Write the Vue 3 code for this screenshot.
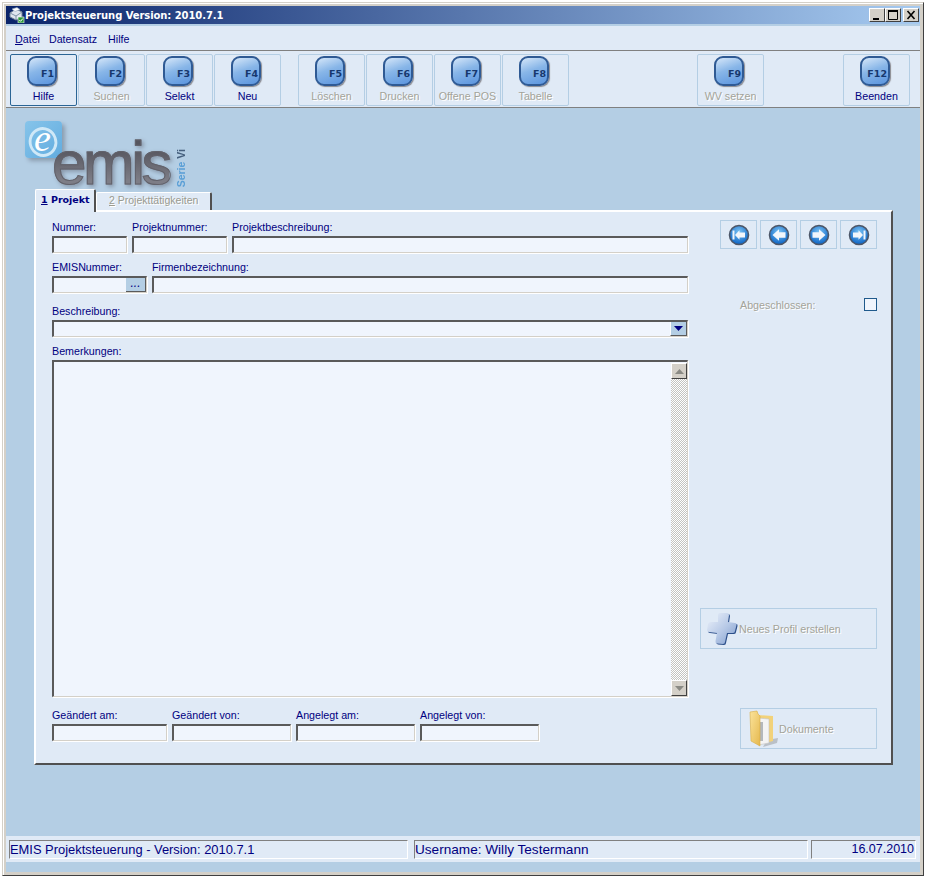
<template>
  <div class="frame">
    <div class="client">
      <!-- Title bar -->
      <div class="titlebar">
        <svg class="app-icon" width="17" height="16" viewBox="0 0 17 16">
          <path d="M2 6 L8 2 L14 5 L14 10 L8 13 L2 10Z" fill="#dfe6ee" stroke="#6f8296" stroke-width="1" />
          <path d="M2 6 L8 9 L14 5 M8 9 V13" fill="none" stroke="#7f93a8" stroke-width="1" />
          <path d="M4 2 L9 0.500 L12 2.500 L7 4.500Z" fill="#fff" stroke="#8fa3b8" stroke-width="0.600" />
          <rect x="10" y="10" width="6" height="6" fill="#2f9a3d" stroke="#fff" stroke-width="0.600" />
          <path d="M11.300 13 L12.600 14.300 L14.800 11.600" fill="none" stroke="#fff" stroke-width="1" />
        </svg>
        <span class="title-text">Projektsteuerung Version: 2010.7.1</span>
        <div class="win-buttons">
          <button class="win-btn">
            <svg width="14" height="12" viewBox="0 0 14 12"><rect x="3" y="9" width="6" height="2" fill="#000" /></svg>
          </button>
          <button class="win-btn">
            <svg width="14" height="12" viewBox="0 0 14 12"><path d="M2.500 2.500 H11.500 V10.500 H2.500Z" fill="none" stroke="#000" /><rect x="2" y="1" width="10" height="2" fill="#000" /></svg>
          </button>
          <button class="win-btn close">
            <svg width="14" height="12" viewBox="0 0 14 12"><path d="M3.500 2 L10.500 10 M10.500 2 L3.500 10" stroke="#000" stroke-width="1.600" /></svg>
          </button>
        </div>
      </div>

      <!-- Menu -->
      <nav class="menubar">
        <span><u>D</u>atei</span>
        <span>Datensatz</span>
        <span class="menu-help">Hilfe</span>
      </nav>

      <!-- Toolbar -->
      <div class="toolbar">
        <template v-for="group in toolbarGroups" :key="group.id">
          <div class="tool-group" :class="group.id">
            <button
              v-for="tool in group.tools"
              :key="tool.key"
              class="tool-btn"
              :class="{ disabled: tool.disabled, active: tool.active }"
            >
              <span class="fkey"><span class="fkey-text">{{ tool.key }}</span></span>
              <span class="tool-label">{{ tool.label }}</span>
            </button>
          </div>
        </template>
      </div>

      <main class="main">
        <!-- Logo -->
        <div class="logo">
          <div class="logo-badge">
            <span class="logo-ring"></span>
            <span class="logo-e">e</span>
          </div>
          <span class="logo-word">emis</span>
          <span class="logo-serie">Serie <b>Vi</b></span>
        </div>

        <!-- Tabs -->
        <div class="tabs">
          <div class="tab selected"><u>1</u> Projekt</div>
          <div class="tab"><u>2</u> Projekttätigkeiten</div>
        </div>

        <!-- Panel -->
        <section class="panel">
          <div class="form">
            <div class="row first">
              <label class="field w-nummer"><span>Nummer:</span><i class="input"></i></label>
              <label class="field w-projnr"><span>Projektnummer:</span><i class="input"></i></label>
              <label class="field grow"><span>Projektbeschreibung:</span><i class="input"></i></label>
            </div>
            <div class="row">
              <label class="field w-projnr">
                <span>EMISNummer:</span>
                <i class="input with-btn"><b class="dots">...</b></i>
              </label>
              <label class="field grow"><span>Firmenbezeichnung:</span><i class="input"></i></label>
            </div>
            <div class="row wide-gap">
              <label class="field grow">
                <span>Beschreibung:</span>
                <i class="input with-btn">
                  <b class="combo-arrow"><svg width="9" height="5" viewBox="0 0 9 5"><path d="M0 0 H9 L4.500 5Z" fill="#000080" /></svg></b>
                </i>
              </label>
            </div>
            <div class="row memo-row">
              <label class="field grow">
                <span>Bemerkungen:</span>
                <i class="input memo">
                  <b class="scrollbar">
                    <b class="scroll-btn"><svg width="9" height="5" viewBox="0 0 9 5"><path d="M0 5 H9 L4.500 0Z" fill="#8a8a84" /></svg></b>
                    <b class="scroll-track"></b>
                    <b class="scroll-btn"><svg width="9" height="5" viewBox="0 0 9 5"><path d="M0 0 H9 L4.500 5Z" fill="#8a8a84" /></svg></b>
                  </b>
                </i>
              </label>
            </div>
            <div class="row audit">
              <label class="field w-audit1"><span>Geändert am:</span><i class="input"></i></label>
              <label class="field w-audit"><span>Geändert von:</span><i class="input"></i></label>
              <label class="field w-audit"><span>Angelegt am:</span><i class="input"></i></label>
              <label class="field w-audit"><span>Angelegt von:</span><i class="input"></i></label>
            </div>
          </div>

          <aside class="side">
            <div class="nav-buttons">
              <button v-for="nav in navButtons" :key="nav" class="nav-btn">
                <svg width="22" height="22" viewBox="0 0 22 22">
                  <defs>
                    <radialGradient :id="'g' + nav" cx="50%" cy="35%" r="65%">
                      <stop offset="0" stop-color="#7cc4f4" />
                      <stop offset="1" stop-color="#0a62c4" />
                    </radialGradient>
                  </defs>
                  <circle cx="11" cy="11" r="9.500" :fill="'url(#g' + nav + ')'" stroke="#4c5668" stroke-width="1.600" />
                  <path v-if="nav === 'first'" d="M4.500 6.500 H6.500 V15.500 H4.500Z M7 11 L11.500 6.200 V8.500 H17 V13.500 H11.500 V15.800Z" fill="#f2f6fb" />
                  <path v-if="nav === 'prev'" d="M4.500 11 L11 5.200 V8.300 H17.500 V13.700 H11 V16.800Z" fill="#f2f6fb" />
                  <path v-if="nav === 'next'" d="M17.500 11 L11 5.200 V8.300 H4.500 V13.700 H11 V16.800Z" fill="#f2f6fb" />
                  <path v-if="nav === 'last'" d="M17.500 6.500 H15.500 V15.500 H17.500Z M15 11 L10.500 6.200 V8.500 H5 V13.500 H10.500 V15.800Z" fill="#f2f6fb" />
                </svg>
              </button>
            </div>

            <div class="closed-row">
              <span class="muted">Abgeschlossen:</span>
              <i class="checkbox"></i>
            </div>

            <button class="action-btn profile">
              <svg width="32" height="34" viewBox="0 0 32 34">
                <defs>
                  <linearGradient id="plus" x1="0" y1="0" x2="1" y2="1">
                    <stop offset="0" stop-color="#eef3fb" />
                    <stop offset="0.550" stop-color="#b6c8e6" />
                    <stop offset="1" stop-color="#7f9ccc" />
                  </linearGradient>
                </defs>
                <path d="M12 3 Q12 1 14 1 L21 1 Q23 1 23 3 L22 10 L29 11 Q31 11 30.500 13 L29 19 Q29 21 27 21 L21 21 L19 30 Q19 32 17 32 L11 31.500 Q9 31 9.500 29 L11 21 L3 20 Q1 20 1 18 L2 12 Q2.500 10 5 10 L12 10Z" fill="#2c4f8a" transform="translate(1 1)" />
                <path d="M12 3 Q12 1 14 1 L21 1 Q23 1 23 3 L22 10 L29 11 Q31 11 30.500 13 L29 19 Q29 21 27 21 L21 21 L19 30 Q19 32 17 32 L11 31.500 Q9 31 9.500 29 L11 21 L3 20 Q1 20 1 18 L2 12 Q2.500 10 5 10 L12 10Z" fill="url(#plus)" />
              </svg>
              <span class="muted">Neues Profil erstellen</span>
            </button>

            <button class="action-btn docs">
              <svg width="30" height="38" viewBox="0 0 30 38">
                <defs>
                  <linearGradient id="folder" x1="0" y1="0" x2="1" y2="1">
                    <stop offset="0" stop-color="#fbe39a" />
                    <stop offset="1" stop-color="#e5b84e" />
                  </linearGradient>
                </defs>
                <path d="M18 30 L29 28 L28 33 L14 37Z" fill="#a9aeb4" opacity="0.700" />
                <path d="M9 5 L24 6 L24 31 L9 35Z" fill="#f2d27a" />
                <path d="M9 8 L20 9 L20 33 L9 35Z" fill="#f4f4f4" stroke="#c2c2c2" stroke-width="0.600" />
                <path d="M11 12 H14 V31 H11Z" fill="#b4b8bc" />
                <path d="M1 2 L8 1 L9 4 L11 6 L11 36 L2 31Z" fill="url(#folder)" stroke="#d9ad45" stroke-width="0.600" />
              </svg>
              <span class="muted">Dokumente</span>
            </button>
          </aside>
        </section>
      </main>

      <!-- Status bar -->
      <footer class="statusbar">
        <div class="status-cell s1">EMIS Projektsteuerung - Version: 2010.7.1</div>
        <div class="status-cell s2">Username: Willy Testermann</div>
        <div class="status-cell s3">16.07.2010</div>
      </footer>
    </div>
  </div>
</template>

<script setup>
const toolbarGroups = [
  {
    id: 'g1',
    tools: [
      { key: 'F1', label: 'Hilfe', active: true },
      { key: 'F2', label: 'Suchen', disabled: true },
      { key: 'F3', label: 'Selekt' },
      { key: 'F4', label: 'Neu' }
    ]
  },
  {
    id: 'g2',
    tools: [
      { key: 'F5', label: 'Löschen', disabled: true },
      { key: 'F6', label: 'Drucken', disabled: true },
      { key: 'F7', label: 'Offene POS', disabled: true },
      { key: 'F8', label: 'Tabelle', disabled: true }
    ]
  },
  { id: 'g3', tools: [{ key: 'F9', label: 'WV setzen', disabled: true }] },
  { id: 'g4', tools: [{ key: 'F12', label: 'Beenden' }] }
];

const navButtons = ['first', 'prev', 'next', 'last'];
</script>

<style>
html, body { background: #fff; }
</style>

<style scoped>
.frame {
  width: 922px;
  height: 874px;
  margin: 2px 0 0 2px;
  padding: 3px;
  box-sizing: border-box;
  background: #d4d0c8;
  border: 1px solid #d4d0c8;
  border-right-color: #404040;
  border-bottom-color: #404040;
  box-shadow: inset 1px 1px 0 #fff;
  font-family: "Liberation Sans", Arial, sans-serif;
  font-size: 10.700px;
  color: #000080;
}

.client {
  height: 100%;
  display: flex;
  flex-direction: column;
  background: #b4cee4;
}

/* Title bar */
.titlebar {
  height: 18px;
  display: flex;
  align-items: center;
  padding: 0 1px 0 2px;
  background: linear-gradient(90deg, #0a246a, #a6caf0);
  flex-shrink: 0;
}
.title-text {
  font-family: "DejaVu Sans", sans-serif;
  font-weight: bold;
  font-size: 10px;
  letter-spacing: -0.080px;
  color: #fff;
  white-space: nowrap;
}
.win-buttons { margin-left: auto; display: flex; }
.win-btn {
  width: 16px;
  height: 14px;
  padding: 0;
  background: #d4d0c8;
  border: 1px solid;
  border-color: #fff #404040 #404040 #fff;
  display: flex;
  align-items: center;
  justify-content: center;
}
.win-btn.close { margin-left: 2px; }

/* Menu */
.menubar {
  height: 22px;
  margin-top: 2px;
  display: flex;
  align-items: center;
  gap: 9px;
  padding: 2px 0 0 9px;
  box-sizing: content-box;
  background: #e0eaf6;
  border-bottom: 1px solid #808080;
  flex-shrink: 0;
}
.menu-help { margin-left: 2px; }

/* Toolbar */
.toolbar {
  height: 52px;
  display: flex;
  padding: 3px 0 1px 4px;
  box-sizing: content-box;
  background: #e0eaf6;
  border-bottom: 1px solid #808080;
  flex-shrink: 0;
}
.tool-group { display: flex; gap: 1px; }
.g2 { margin-left: 17px; }
.g3 { margin-left: 128px; }
.g4 { margin-left: 79px; }
.tool-btn {
  width: 67px;
  height: 52px;
  padding: 1px 0 0;
  box-sizing: border-box;
  background: transparent;
  border: 1px solid #b4cee4;
  border-radius: 2px;
  display: flex;
  flex-direction: column;
  align-items: center;
  font: inherit;
  color: #000080;
}
.tool-btn.active { border-color: #2b6595; }
.tool-btn.disabled .tool-label { color: #a3a399; text-shadow: 1px 1px 0 #fff; }
.fkey {
  width: 30px;
  height: 30px;
  margin-right: 3px;
  box-sizing: border-box;
  border: 2px solid #2f5a94;
  border-radius: 9px;
  background: linear-gradient(160deg, #d6e7f9 0%, #88b6e8 45%, #5a94de 100%);
  box-shadow: 1px 1px 1px #8a8a90;
  display: flex;
  align-items: flex-end;
  justify-content: flex-end;
}
.fkey-text {
  font-size: 9.500px;
  font-weight: bold;
  font-family: "DejaVu Sans", sans-serif;
  color: #17386e;
  line-height: 12px;
  padding: 0 1px 4px 0;
}
.tool-label { margin-top: 3px; line-height: 14px; white-space: nowrap; }

/* Main */
.main {
  flex: 1;
  min-height: 0;
  padding-left: 28px;
  display: flex;
  flex-direction: column;
}

/* Logo */
.logo {
  position: relative;
  height: 81px;
  flex-shrink: 0;
}
.logo-badge {
  position: absolute;
  left: -9px;
  top: 13px;
  width: 37px;
  height: 37px;
  border-radius: 4px;
  background: linear-gradient(135deg, #86c4ea, #62acdf);
  box-shadow: 3px 3px 4px #8b9cae;
}
.logo-ring {
  position: absolute;
  left: 3px;
  top: 6px;
  width: 24px;
  height: 24px;
  border: 3px solid #cfe8f7;
  border-radius: 50%;
  transform: rotate(-20deg) scaleX(0.950);
}
.logo-e {
  position: absolute;
  left: 9px;
  top: -1px;
  font-family: "Liberation Serif", serif;
  font-style: italic;
  font-size: 38px;
  line-height: 36px;
  color: #fff;
}
.logo-word {
  position: absolute;
  left: 18px;
  top: 30px;
  font-family: "Liberation Sans", sans-serif;
  font-size: 62px;
  line-height: 50px;
  letter-spacing: -3.500px;
  -webkit-text-stroke: 1px #62626b;
  background: linear-gradient(180deg, #55555e 20%, #7d7d86 85%);
  -webkit-background-clip: text;
  background-clip: text;
  color: transparent;
  filter: drop-shadow(2px 2px 2px #8796a8);
}
.logo-serie {
  position: absolute;
  left: 142px;
  top: 41px;
  writing-mode: vertical-rl;
  transform: rotate(180deg);
  font-size: 10.500px;
  font-weight: bold;
  line-height: 11px;
  white-space: nowrap;
  color: #5a9fd6;
}
.logo-serie b { color: #46607e; }

/* Tabs */
.tabs {
  height: 21px;
  display: flex;
  align-items: flex-end;
  flex-shrink: 0;
  padding-left: 1px;
}
.tab {
  width: 116px;
  height: 18px;
  box-sizing: border-box;
  padding-left: 12px;
  line-height: 15px;
  font-size: 10.500px;
  white-space: nowrap;
  color: #9a9a90;
  background: #e0eaf6;
  border: 1px solid #fff;
  border-bottom: 0;
  border-right: 2px solid #505050;
  border-radius: 2px 2px 0 0;
  text-shadow: 1px 1px 0 #fff;
}
.tab.selected {
  width: 61px;
  height: 23px;
  margin-bottom: -2px;
  padding-left: 5px;
  line-height: 20px;
  font-family: "DejaVu Sans", sans-serif;
  font-size: 9.500px;
  font-weight: bold;
  color: #000080;
  text-shadow: none;
  position: relative;
  z-index: 1;
}

/* Panel */
.panel {
  width: 859px;
  height: 555px;
  box-sizing: border-box;
  display: flex;
  background: #e0eaf6;
  border: 2px solid;
  border-color: #fff #505050 #505050 #fff;
  padding-left: 16px;
  flex-shrink: 0;
}
.form {
  width: 636px;
  padding-top: 9px;
  display: flex;
  flex-direction: column;
}
.row {
  display: flex;
  gap: 5px;
  margin-top: 8px;
}
.row.first { margin-top: 0; }
.row.wide-gap { margin-top: 12px; }
.row.audit { margin-top: 12px; }
.field {
  display: flex;
  flex-direction: column;
}
.field > span {
  height: 15px;
  line-height: 13px;
  white-space: nowrap;
}
.grow { flex: 1; }
.w-nummer { width: 75px; }
.w-projnr { width: 95px; }
.w-audit1 { width: 115px; }
.w-audit { width: 119px; }

.input {
  display: flex;
  justify-content: flex-end;
  height: 17px;
  box-sizing: border-box;
  background: #f0f5fd;
  border-style: solid;
  border-width: 2px 1px 1px 2px;
  border-color: #5a5a5a #d4d0c8 #d4d0c8 #5a5a5a;
  box-shadow: 1px 1px 0 #fff;
}
.dots {
  width: 19px;
  background: #b4cee4;
  border-right: 1px solid #5a5a5a;
  border-bottom: 1px solid #5a5a5a;
  text-align: center;
  font-weight: normal;
  line-height: 11px;
  font-size: 12px;
}
.combo-arrow {
  width: 15px;
  background: #b4cee4;
  border-left: 1px solid #fff;
  border-right: 1px solid #5a5a5a;
  border-bottom: 1px solid #5a5a5a;
  display: flex;
  align-items: center;
  justify-content: center;
}
.memo { height: 337px; padding: 1px 0 0; }
.scrollbar {
  width: 16px;
  display: flex;
  flex-direction: column;
}
.scroll-btn {
  height: 16px;
  box-sizing: border-box;
  background: #d4d0c8;
  border: 1px solid;
  border-color: #fff #404040 #404040 #fff;
  display: flex;
  align-items: center;
  justify-content: center;
  flex-shrink: 0;
}
.scroll-track {
  flex: 1;
  background: conic-gradient(#c4c4c0 25%, #fff 0 50%, #c4c4c0 0 75%, #fff 0) 0 0 / 2px 2px;
}

/* Right column */
.side {
  width: 177px;
  margin-left: 12px;
  padding-top: 8px;
  display: flex;
  flex-direction: column;
  align-items: flex-end;
}
.nav-buttons { display: flex; gap: 3px; }
.nav-btn {
  width: 37px;
  height: 29px;
  padding: 0;
  background: transparent;
  border: 1px solid #b4cee4;
  display: flex;
  align-items: center;
  justify-content: center;
}
.closed-row {
  width: 137px;
  margin-top: 49px;
  height: 13px;
  display: flex;
  align-items: center;
  justify-content: space-between;
}
.checkbox {
  width: 13px;
  height: 13px;
  box-sizing: border-box;
  border: 1px solid #1f5a8c;
  background: #f0f5fd;
}
.muted { color: #a3a399; text-shadow: 1px 1px 0 #fff; white-space: nowrap; }
.action-btn {
  height: 41px;
  padding: 0;
  box-sizing: border-box;
  background: transparent;
  border: 1px solid #b4cee4;
  display: flex;
  align-items: center;
  font: inherit;
}
.profile {
  width: 177px;
  margin-top: 297px;
  padding-left: 5px;
  gap: 1px;
}
.docs {
  width: 137px;
  margin-top: 59px;
  padding-left: 8px;
}

/* Status bar */
.statusbar {
  height: 26px;
  margin-bottom: 10px;
  padding: 4px 3px 0;
  box-sizing: border-box;
  background: #e0eaf6;
  display: flex;
  flex-shrink: 0;
  font-size: 12.900px;
}
.status-cell {
  height: 19px;
  box-sizing: border-box;
  line-height: 17px;
  white-space: nowrap;
  border-top: 1px solid #808080;
  border-left: 1px solid #808080;
  border-right: 1px solid #fff;
  border-bottom: 1px solid #fff;
}
.s1 { width: 399px; }
.s2 { width: 394px; margin-left: 6px; font-size: 13.600px; }
.s3 { width: 105px; margin-left: 3px; text-align: right; padding-right: 1px; font-size: 12.500px; }
</style>
